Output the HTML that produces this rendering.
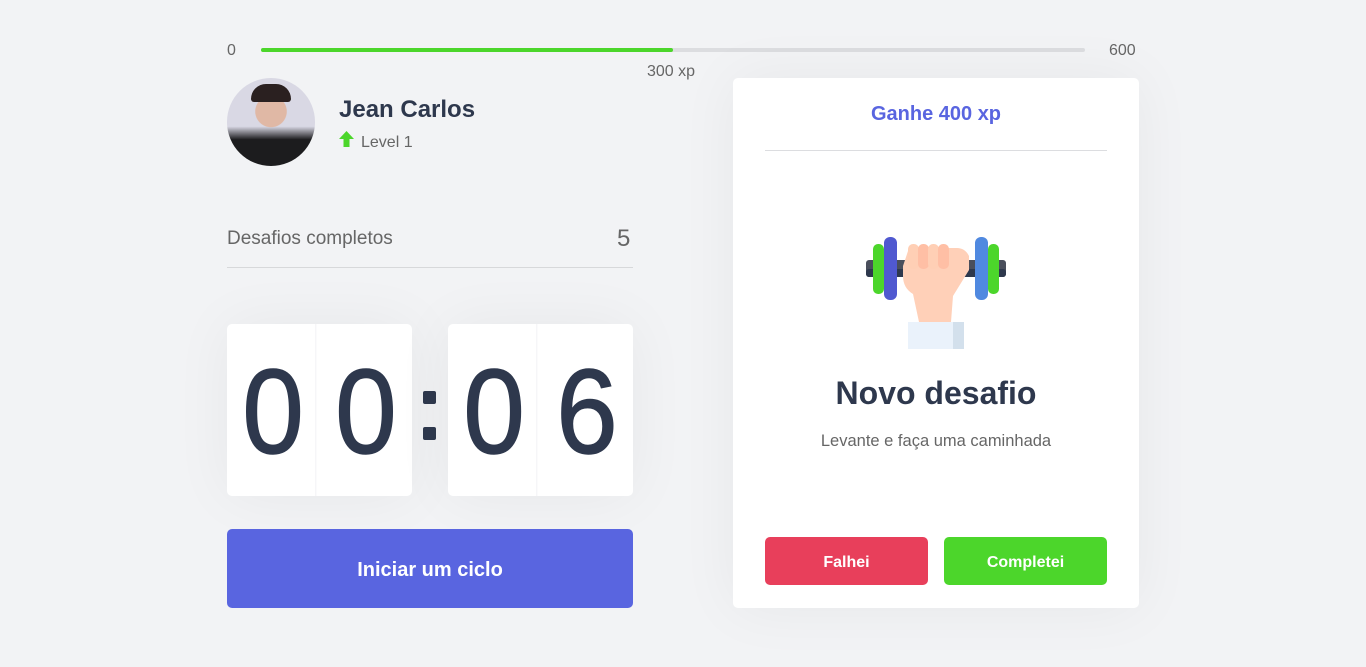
<!DOCTYPE html>
<html><head><style>
*{margin:0;padding:0;box-sizing:border-box}
body{width:1366px;height:667px;background:#f2f3f5;font-family:"Liberation Sans",sans-serif;color:#666;position:relative;overflow:hidden}
.a{position:absolute}
.digit{position:absolute;top:324px;width:185px;height:172px;background:#fff;border-radius:5px;box-shadow:0 0 60px rgba(0,0,0,0.05);display:flex}
.digit span{flex:1;text-align:center;font-size:120px;line-height:176px;color:#2e384d;font-weight:normal;-webkit-text-stroke:1.5px #2e384d;transform:scaleX(0.92)}
.digit span:first-child{border-right:1px solid #f0f1f3}
</style></head><body>
<div class="a" style="left:227px;top:42px;font-size:16px;color:#666">0</div>
<div class="a" style="left:261px;top:48px;width:824px;height:4px;background:#dcdde0;border-radius:4px"></div>
<div class="a" style="left:261px;top:48px;width:412px;height:4px;background:#4cd62b;border-radius:4px"></div>
<div class="a" style="left:647px;top:63px;font-size:16px;color:#666">300 xp</div>
<div class="a" style="left:1109px;top:42px;font-size:16px;color:#666">600</div>

<div class="a" style="left:227px;top:78px;width:88px;height:88px;border-radius:50%;background:radial-gradient(circle at 50% 38%,#e0b8a5 0 22%,transparent 23%),linear-gradient(#d9d8e4 0 55%,#1c1c1e 70%);overflow:hidden">
<div class="a" style="left:24px;top:6px;width:40px;height:18px;background:#2a2020;border-radius:20px 20px 4px 4px"></div>
</div>
<div class="a" style="left:339px;top:96px;font-size:24px;font-weight:bold;color:#2e384d">Jean Carlos</div>
<svg class="a" style="left:339px;top:131px" width="15" height="16" viewBox="0 0 15 16"><path d="M7.5 0L15 8H10.5V16H4.5V8H0Z" fill="#4cd62b"/></svg>
<div class="a" style="left:361px;top:134px;font-size:16px;color:#666">Level 1</div>

<div class="a" style="left:227px;top:228px;font-size:19px;color:#666">Desafios completos</div>
<div class="a" style="left:617px;top:225px;font-size:24px;color:#666">5</div>
<div class="a" style="left:227px;top:267px;width:406px;height:1px;background:#d7d8da"></div>

<div class="digit" style="left:227px"><span>0</span><span>0</span></div>
<div class="a" style="left:423px;top:391px;width:13px;height:13px;background:#2e384d;border-radius:2px"></div>
<div class="a" style="left:423px;top:427px;width:13px;height:13px;background:#2e384d;border-radius:2px"></div>
<div class="digit" style="left:448px"><span>0</span><span>6</span></div>

<div class="a" style="left:227px;top:529px;width:406px;height:79px;background:#5965e0;border-radius:5px;color:#fff;font-size:20px;font-weight:bold;text-align:center;line-height:82px">Iniciar um ciclo</div>

<div class="a" style="left:733px;top:78px;width:406px;height:530px;background:#fff;border-radius:5px;box-shadow:0 0 60px rgba(0,0,0,0.05)">
<div class="a" style="left:0;width:406px;top:25px;text-align:center;font-size:20px;font-weight:bold;color:#5965e0">Ganhe 400 xp</div>
<div class="a" style="left:32px;top:72px;width:342px;height:1px;background:#dcdde0"></div>
<svg class="a" style="left:132px;top:158px" width="142" height="114" viewBox="0 0 142 114">
<rect x="1" y="24" width="140" height="17" rx="3" fill="#4a4f5c"/>
<rect x="1" y="33" width="140" height="8" rx="3" fill="#2e384d"/>
<rect x="8" y="8" width="11" height="50" rx="5" fill="#4cd62b"/>
<rect x="19" y="1" width="13" height="63" rx="6" fill="#5059d0"/>
<rect x="110" y="1" width="13" height="63" rx="6" fill="#5089e0"/>
<rect x="123" y="8" width="11" height="50" rx="5" fill="#4cd62b"/>
<path d="M46 30 L46 40 Q46 52 56 58 L62 86 L94 86 L96 60 L112 34 L112 20 Q108 12 100 12 L52 12 Z" fill="#ffd0b8" transform="translate(-8,0)"/>
<rect x="43" y="8" width="11" height="25" rx="5" fill="#ffcfb5"/>
<rect x="53" y="8" width="11" height="25" rx="5" fill="#ffbfa5"/>
<rect x="63" y="8" width="11" height="25" rx="5" fill="#ffcfb5"/>
<rect x="73" y="8" width="11" height="25" rx="5" fill="#ffbfa5"/>
<rect x="43" y="86" width="56" height="27" fill="#eaf2fb"/>
<rect x="88" y="86" width="11" height="27" fill="#d3e0ec"/>
</svg>
<div class="a" style="left:0;width:406px;top:297px;text-align:center;font-size:32px;font-weight:bold;color:#2e384d">Novo desafio</div>
<div class="a" style="left:0;width:406px;top:354px;text-align:center;font-size:16.5px;color:#666">Levante e faça uma caminhada</div>
<div class="a" style="left:32px;top:459px;width:163px;height:48px;background:#e83f5b;border-radius:5px;color:#fff;font-weight:bold;font-size:16px;text-align:center;line-height:52px">Falhei</div>
<div class="a" style="left:211px;top:459px;width:163px;height:48px;background:#4cd62b;border-radius:5px;color:#fff;font-weight:bold;font-size:16px;text-align:center;line-height:52px">Completei</div>
</div>
</body></html>
